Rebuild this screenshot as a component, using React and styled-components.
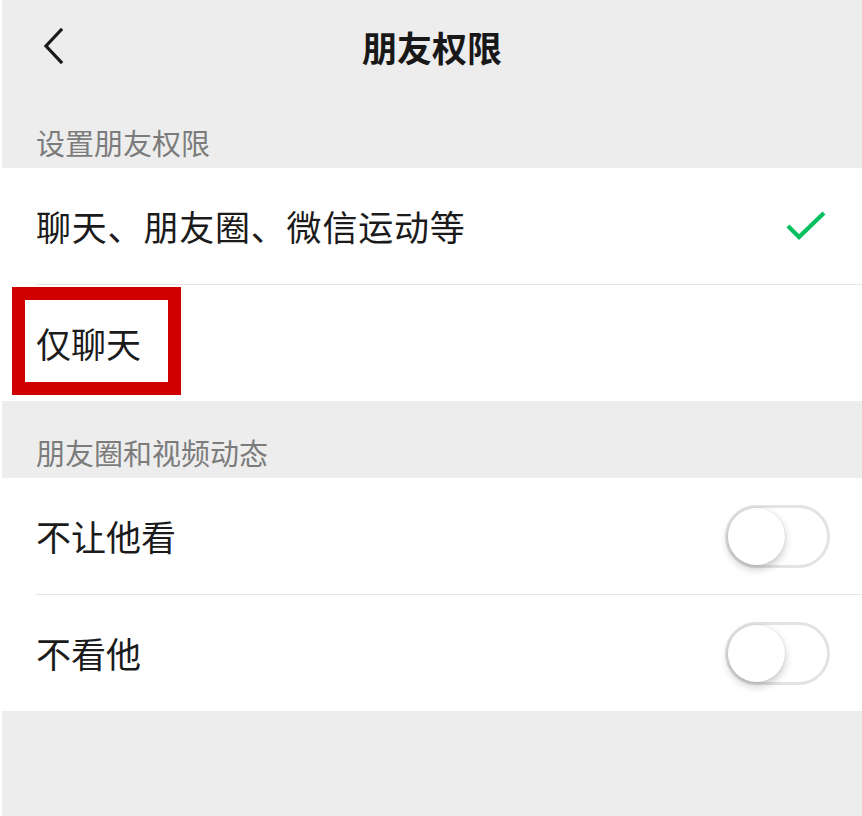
import React, { useState } from 'react';
import styled, { createGlobalStyle } from 'styled-components';

const GlobalStyle = createGlobalStyle`
  html, body {
    margin: 0;
    padding: 0;
    background: #ededed;
  }
  body {
    font-family: "Noto Sans CJK SC", "Noto Sans", sans-serif;
    -webkit-font-smoothing: antialiased;
  }
`;

const Page = styled.div`
  width: 862px;
  min-height: 816px;
  box-sizing: border-box;
  background: #ededed;
  border-left: 2px solid #fff;
`;

const TopBar = styled.div`
  height: 95px;
  display: flex;
  align-items: flex-start;
  justify-content: center;
  position: relative;
`;

const BackButton = styled.button`
  position: absolute;
  left: 31px;
  top: 26px;
  width: 42px;
  height: 40px;
  padding: 0;
  border: none;
  background: none;
  display: flex;
  align-items: center;
  justify-content: center;
`;

const Title = styled.h1`
  margin: 0;
  padding-top: 27px;
  font-size: 35px;
  line-height: 40px;
  font-weight: 700;
  color: #181818;
`;

const SectionHead = styled.div`
  height: ${p => p.$h}px;
  box-sizing: border-box;
  display: flex;
  align-items: flex-end;
  padding: 0 0 ${p => p.$pb}px 34px;
  font-size: 29px;
  line-height: 30px;
  color: #7c7c7c;
`;

const Group = styled.div`
  background: #fff;
`;

const Row = styled.div`
  position: relative;
  height: ${p => p.$h || 116}px;
  display: flex;
  align-items: center;
  justify-content: space-between;
  padding: 0 32px 0 34px;
  font-size: 35px;
  color: #1b1b1b;
  & + & {
    border-top: 1px solid #e6e6e6;
  }
  & + &::before {
    content: '';
    position: absolute;
    left: 0;
    top: -1px;
    width: 34px;
    height: 1px;
    background: #fff;
  }
`;

const Label = styled.span`
  line-height: 40px;
  position: relative;
  z-index: 1;
  letter-spacing: ${p => p.$ls || 0}px;
`;

const Mark = styled.div`
  position: absolute;
  left: 10px;
  top: 2px;
  width: 169px;
  height: 108px;
  box-sizing: border-box;
  border: 13px solid #d10000;
`;

const Check = styled.svg`
  width: 42px;
  height: 32px;
  margin-right: 3px;
  margin-top: 2px;
`;

const Track = styled.button`
  position: relative;
  width: 105px;
  height: 63px;
  padding: 0;
  box-sizing: border-box;
  border-radius: 32px;
  border: 3px solid #e3e3e3;
  background: ${p => (p.$on ? '#07c160' : '#fff')};
  cursor: pointer;
`;

const Knob = styled.span`
  position: absolute;
  top: 0;
  left: ${p => (p.$on ? '42px' : '0')};
  width: 57px;
  height: 57px;
  border-radius: 50%;
  background: #fff;
  box-shadow: 0 4px 8px rgba(0, 0, 0, 0.22), 0 0 2px rgba(0, 0, 0, 0.12);
`;

const Toggle = ({ on, onClick }) => (
  <Track $on={on} onClick={onClick}>
    <Knob $on={on} />
  </Track>
);

export default function App() {
  const [hideFrom, setHideFrom] = useState(false);
  const [hideThem, setHideThem] = useState(false);

  return (
    <Page>
      <GlobalStyle />
      <TopBar>
        <BackButton>
          <svg width="24" height="38" viewBox="0 0 24 38" fill="none">
            <path d="M19 3 L4 19 L19 35" stroke="#1a1a1a" strokeWidth="3.2" strokeLinecap="square" strokeLinejoin="miter" />
          </svg>
        </BackButton>
        <Title>朋友权限</Title>
      </TopBar>

      <SectionHead $h={73} $pb={11}>设置朋友权限</SectionHead>
      <Group>
        <Row>
          <Label $ls={0.8}>聊天、朋友圈、微信运动等</Label>
          <Check viewBox="0 0 42 32" fill="none">
            <path d="M3 15 L14 26 L39 2" stroke="#07c160" strokeWidth="4.2" />
          </Check>
        </Row>
        <Row>
          <Mark />
          <Label>仅聊天</Label>
        </Row>
      </Group>

      <SectionHead $h={77} $pb={11}>朋友圈和视频动态</SectionHead>
      <Group>
        <Row>
          <Label>不让他看</Label>
          <Toggle on={hideFrom} onClick={() => setHideFrom(v => !v)} />
        </Row>
        <Row>
          <Label>不看他</Label>
          <Toggle on={hideThem} onClick={() => setHideThem(v => !v)} />
        </Row>
      </Group>
    </Page>
  );
}
